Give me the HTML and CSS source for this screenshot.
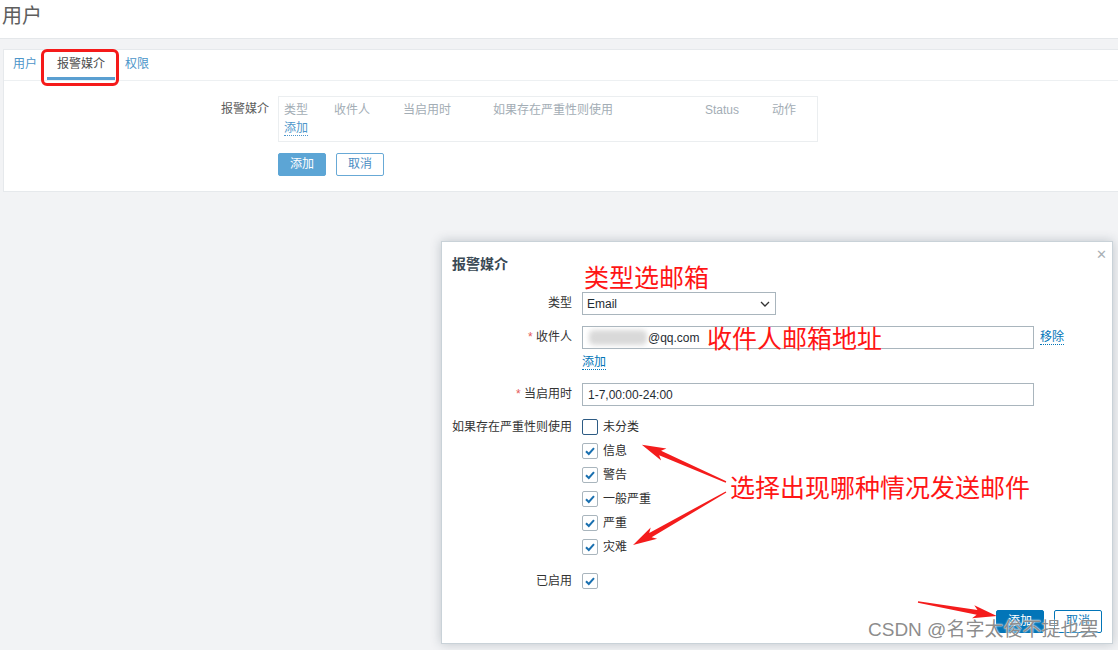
FILE: index.html
```html
<!DOCTYPE html>
<html lang="zh-CN">
<head>
<meta charset="utf-8">
<title>用户</title>
<link rel="stylesheet" href="styles.css">
</head>
<body>
<header class="page-header">
  <h1 class="page-title">用户</h1>
</header>

<main class="content">
  <section class="panel">
    <nav class="tabs">
      <a class="tab">用户</a>
      <a class="tab active">报警媒介</a>
      <a class="tab">权限</a>
    </nav>
    <div class="panel-body">
      <div class="form-row">
        <div class="form-label">报警媒介</div>
        <div class="media-table">
          <div class="media-head">
            <span>类型</span>
            <span>收件人</span>
            <span>当启用时</span>
            <span>如果存在严重性则使用</span>
            <span>Status</span>
            <span>动作</span>
          </div>
          <div class="media-add"><a class="link link-light">添加</a></div>
        </div>
      </div>
      <div class="form-row form-actions">
        <div></div>
        <div class="buttons">
          <button class="btn btn-primary-light">添加</button>
          <button class="btn btn-alt-light">取消</button>
        </div>
      </div>
    </div>
  </section>
</main>

<div class="dialog">
  <div class="dialog-title">报警媒介</div>
  <span class="dialog-close">&#x2715;</span>
  <div class="dialog-form">
    <div class="d-row">
      <div class="d-label">类型</div>
      <div class="d-field">
        <div class="select">
          <span>Email</span>
          <svg class="chev" width="10" height="6" viewBox="0 0 10 6"><path d="M1 1 L5 5 L9 1" fill="none" stroke="#333" stroke-width="1.3"/></svg>
        </div>
      </div>
    </div>
    <div class="d-row row-recipient">
      <div class="d-label"><span class="req">*</span> 收件人</div>
      <div class="d-field">
        <div class="field-line">
          <div class="input-wrap">
            <input class="input input-email" type="text" value="@qq.com">
            <span class="mask"></span>
          </div>
          <a class="link link-remove">移除</a>
        </div>
        <div class="add-line"><a class="link">添加</a></div>
      </div>
    </div>
    <div class="d-row row-period">
      <div class="d-label"><span class="req">*</span> 当启用时</div>
      <div class="d-field">
        <input class="input" type="text" value="1-7,00:00-24:00">
      </div>
    </div>
    <div class="d-row row-severity">
      <div class="d-label d-label-top">如果存在严重性则使用</div>
      <div class="d-field">
        <ul class="cb-list">
          <li class="cb-item"><span class="cb cb-focus"></span>未分类</li>
          <li class="cb-item"><span class="cb"><svg width="14" height="14" viewBox="0 0 14 14"><path d="M3 7.2 L5.8 10 L11 4.2" fill="none" stroke="#1a70b0" stroke-width="2"/></svg></span>信息</li>
          <li class="cb-item"><span class="cb"><svg width="14" height="14" viewBox="0 0 14 14"><path d="M3 7.2 L5.8 10 L11 4.2" fill="none" stroke="#1a70b0" stroke-width="2"/></svg></span>警告</li>
          <li class="cb-item"><span class="cb"><svg width="14" height="14" viewBox="0 0 14 14"><path d="M3 7.2 L5.8 10 L11 4.2" fill="none" stroke="#1a70b0" stroke-width="2"/></svg></span>一般严重</li>
          <li class="cb-item"><span class="cb"><svg width="14" height="14" viewBox="0 0 14 14"><path d="M3 7.2 L5.8 10 L11 4.2" fill="none" stroke="#1a70b0" stroke-width="2"/></svg></span>严重</li>
          <li class="cb-item"><span class="cb"><svg width="14" height="14" viewBox="0 0 14 14"><path d="M3 7.2 L5.8 10 L11 4.2" fill="none" stroke="#1a70b0" stroke-width="2"/></svg></span>灾难</li>
        </ul>
      </div>
    </div>
    <div class="d-row row-enabled">
      <div class="d-label d-label-top">已启用</div>
      <div class="d-field">
        <span class="cb"><svg width="14" height="14" viewBox="0 0 14 14"><path d="M3 7.2 L5.8 10 L11 4.2" fill="none" stroke="#1a70b0" stroke-width="2"/></svg></span>
      </div>
    </div>
  </div>
  <div class="dialog-footer">
    <button class="btn btn-primary">添加</button>
    <button class="btn btn-alt">取消</button>
  </div>
</div>

<span class="red-box"></span>
<span class="note note-type">类型选邮箱</span>
<span class="note note-recipient">收件人邮箱地址</span>
<span class="note note-severity">选择出现哪种情况发送邮件</span>

<svg class="arrows" width="1118" height="650" viewBox="0 0 1118 650">
  <g fill="#f41c1c">
    <polygon transform="translate(726 482) rotate(203.8)" points="0,-0.7 72,-2.4 68,-6.5 92,0 68,6.5 72,2.4 0,0.7"/>
    <polygon transform="translate(726 492) rotate(150.3)" points="0,-0.7 87,-2.4 83,-6.5 107,0 83,6.5 87,2.4 0,0.7"/>
    <polygon transform="translate(918 602) rotate(10)" points="0,-0.7 60,-2.4 56,-6.5 80,0 56,6.5 60,2.4 0,0.7"/>
  </g>
</svg>

<span class="watermark">CSDN @名字太俊不提也罢</span>
</body>
</html>
```

FILE: styles.css
```css
* { box-sizing: border-box; }

html, body { margin: 0; padding: 0; }

body {
  position: relative;
  width: 1118px;
  height: 650px;
  overflow: hidden;
  background: #f2f3f5;
  font-family: "Liberation Sans", "Noto Sans CJK SC", sans-serif;
  font-size: 12px;
  color: #1f2c33;
}

/* ---------- page header ---------- */
.page-header {
  height: 39px;
  background: #fff;
  border-bottom: 1px solid #e4e7ea;
  padding-left: 2px;
}

.page-title {
  margin: 0;
  font-weight: normal;
  font-size: 20px;
  line-height: 32px;
  color: #5e5e5e;
}

/* ---------- main panel ---------- */
.content { padding: 10px 0 0 3px; }

.panel {
  background: #fff;
  border: 1px solid #e6e9ec;
  border-right: none;
}

.tabs {
  display: flex;
  height: 31px;
  border-bottom: 1px solid #edf0f2;
}

.tab {
  height: 30px;
  padding: 0 10px;
  line-height: 29px;
  border-bottom: 3px solid transparent;
  color: #4b95c9;
}

.tab:first-child { padding-left: 9px; }

.tab.active {
  color: #4d4d4d;
  border-bottom-color: #5a9fd1;
}

.panel-body { padding: 15px 0 15px; }

.form-row {
  display: grid;
  grid-template-columns: 265px 540px;
  column-gap: 9px;
}

.form-actions { margin-top: 11px; }

.form-label {
  text-align: right;
  padding-top: 6px;
  line-height: 14px;
  color: #5d5d5d;
}

.media-table {
  border: 1px solid #ebeef0;
  padding: 6px 5px 5px;
}

.media-head {
  display: grid;
  grid-template-columns: 50px 69px 90px 212px 67px auto;
  line-height: 14px;
  color: #a3adb5;
}

.media-add {
  margin-top: 5px;
  line-height: 13px;
}

.link {
  display: inline-block;
  color: #0275b8;
  border-bottom: 1px dotted #0275b8;
  line-height: 13px;
  cursor: pointer;
}

.link-light {
  color: #4e96ca;
  border-bottom-color: #4e96ca;
}

.buttons {
  display: flex;
  gap: 10px;
}

.btn {
  width: 48px;
  height: 23px;
  padding: 0;
  border: 1px solid;
  border-radius: 2px;
  font-family: "Liberation Sans", "Noto Sans CJK SC", sans-serif;
  font-size: 12px;
  line-height: 21px;
  cursor: pointer;
}

.btn-primary-light {
  background: #5ca5d5;
  border-color: #5ca5d5;
  color: #fff;
}

.btn-alt-light {
  background: #fff;
  border-color: #68a9d6;
  color: #4b8dc2;
}

.btn-primary {
  background: #0275b8;
  border-color: #0275b8;
  color: #fff;
}

.btn-alt {
  background: #fff;
  border-color: #0275b8;
  color: #0275b8;
}

/* ---------- dialog ---------- */
.dialog {
  position: absolute;
  left: 441px;
  top: 241px;
  width: 672px;
  height: 403px;
  display: flex;
  flex-direction: column;
  padding: 14px 10px 10px;
  background: #fff;
  border: 1px solid #c9d2d8;
  box-shadow: 0 0 10px rgba(40, 60, 75, 0.25);
}

.dialog-title {
  font-size: 14px;
  font-weight: bold;
  line-height: 16px;
  color: #3a4955;
}

.dialog-close {
  position: absolute;
  right: 5px;
  top: 5px;
  font-size: 13px;
  font-weight: bold;
  line-height: 16px;
  color: #a9b0b5;
  font-family: "DejaVu Sans", sans-serif;
}

.dialog-form { margin-top: 20px; }

.d-row {
  display: grid;
  grid-template-columns: 120px 1fr;
  column-gap: 10px;
}

.row-recipient { margin-top: 11px; }
.row-period { margin-top: 13px; }
.row-severity { margin-top: 13px; }
.row-enabled { margin-top: 18px; }

.d-label {
  text-align: right;
  line-height: 23px;
  color: #333;
  white-space: nowrap;
}

.d-label-top { line-height: 17px; }

.req { color: #e45959; }

.select {
  display: flex;
  align-items: center;
  justify-content: space-between;
  width: 194px;
  height: 23px;
  padding: 0 5px 0 4px;
  border: 1px solid #a9b5bd;
  color: #1f2c33;
}

.field-line {
  display: flex;
  align-items: center;
  gap: 6px;
}

.input-wrap { position: relative; }

.input {
  display: block;
  width: 452px;
  height: 23px;
  padding: 0 5px;
  border: 1px solid #a9b5bd;
  border-radius: 0;
  font-family: "Liberation Sans", "Noto Sans CJK SC", sans-serif;
  font-size: 12px;
  color: #1f2c33;
  background: #fff;
  outline: none;
}

.input-email { padding-left: 65px; }

.mask {
  position: absolute;
  left: 7px;
  top: 4px;
  width: 58px;
  height: 15px;
  border-radius: 5px;
  background: #d9d9d9;
  filter: blur(2.5px);
}

.add-line {
  margin-top: 7px;
  line-height: 13px;
}

.cb-list {
  list-style: none;
  margin: 0;
  padding: 0;
  display: flex;
  flex-direction: column;
  gap: 8px;
}

.cb-item {
  display: flex;
  align-items: center;
  gap: 5px;
  height: 16px;
  line-height: 17px;
  color: #2e2e2e;
}

.cb {
  display: flex;
  align-items: center;
  justify-content: center;
  width: 16px;
  height: 16px;
  border: 1px solid #a9b5bd;
  border-radius: 2px;
  background: #fff;
}

.cb-focus { border-color: #2d5b84; }

.dialog-footer {
  margin-top: auto;
  display: flex;
  justify-content: flex-end;
  gap: 10px;
}

/* ---------- annotations ---------- */
.red-box {
  position: absolute;
  left: 41px;
  top: 49px;
  width: 78px;
  height: 37px;
  border: 3px solid #f51a1a;
  border-radius: 6px;
}

.note {
  position: absolute;
  font-family: "Noto Sans CJK SC", sans-serif;
  font-size: 25px;
  line-height: 25px;
  color: #ff1515;
  white-space: nowrap;
}

.note-type { left: 584px; top: 264px; }
.note-recipient { left: 707px; top: 325px; }
.note-severity { left: 730px; top: 474px; }

.arrows {
  position: absolute;
  left: 0;
  top: 0;
  pointer-events: none;
}

.watermark {
  position: absolute;
  left: 868px;
  top: 619px;
  font-family: "Liberation Sans", "Noto Sans CJK SC", sans-serif;
  font-size: 19px;
  line-height: 22px;
  color: rgba(110, 110, 110, 0.8);
  text-shadow: 0 0 2px #fff, 0 0 1px #fff;
  white-space: nowrap;
}
```
